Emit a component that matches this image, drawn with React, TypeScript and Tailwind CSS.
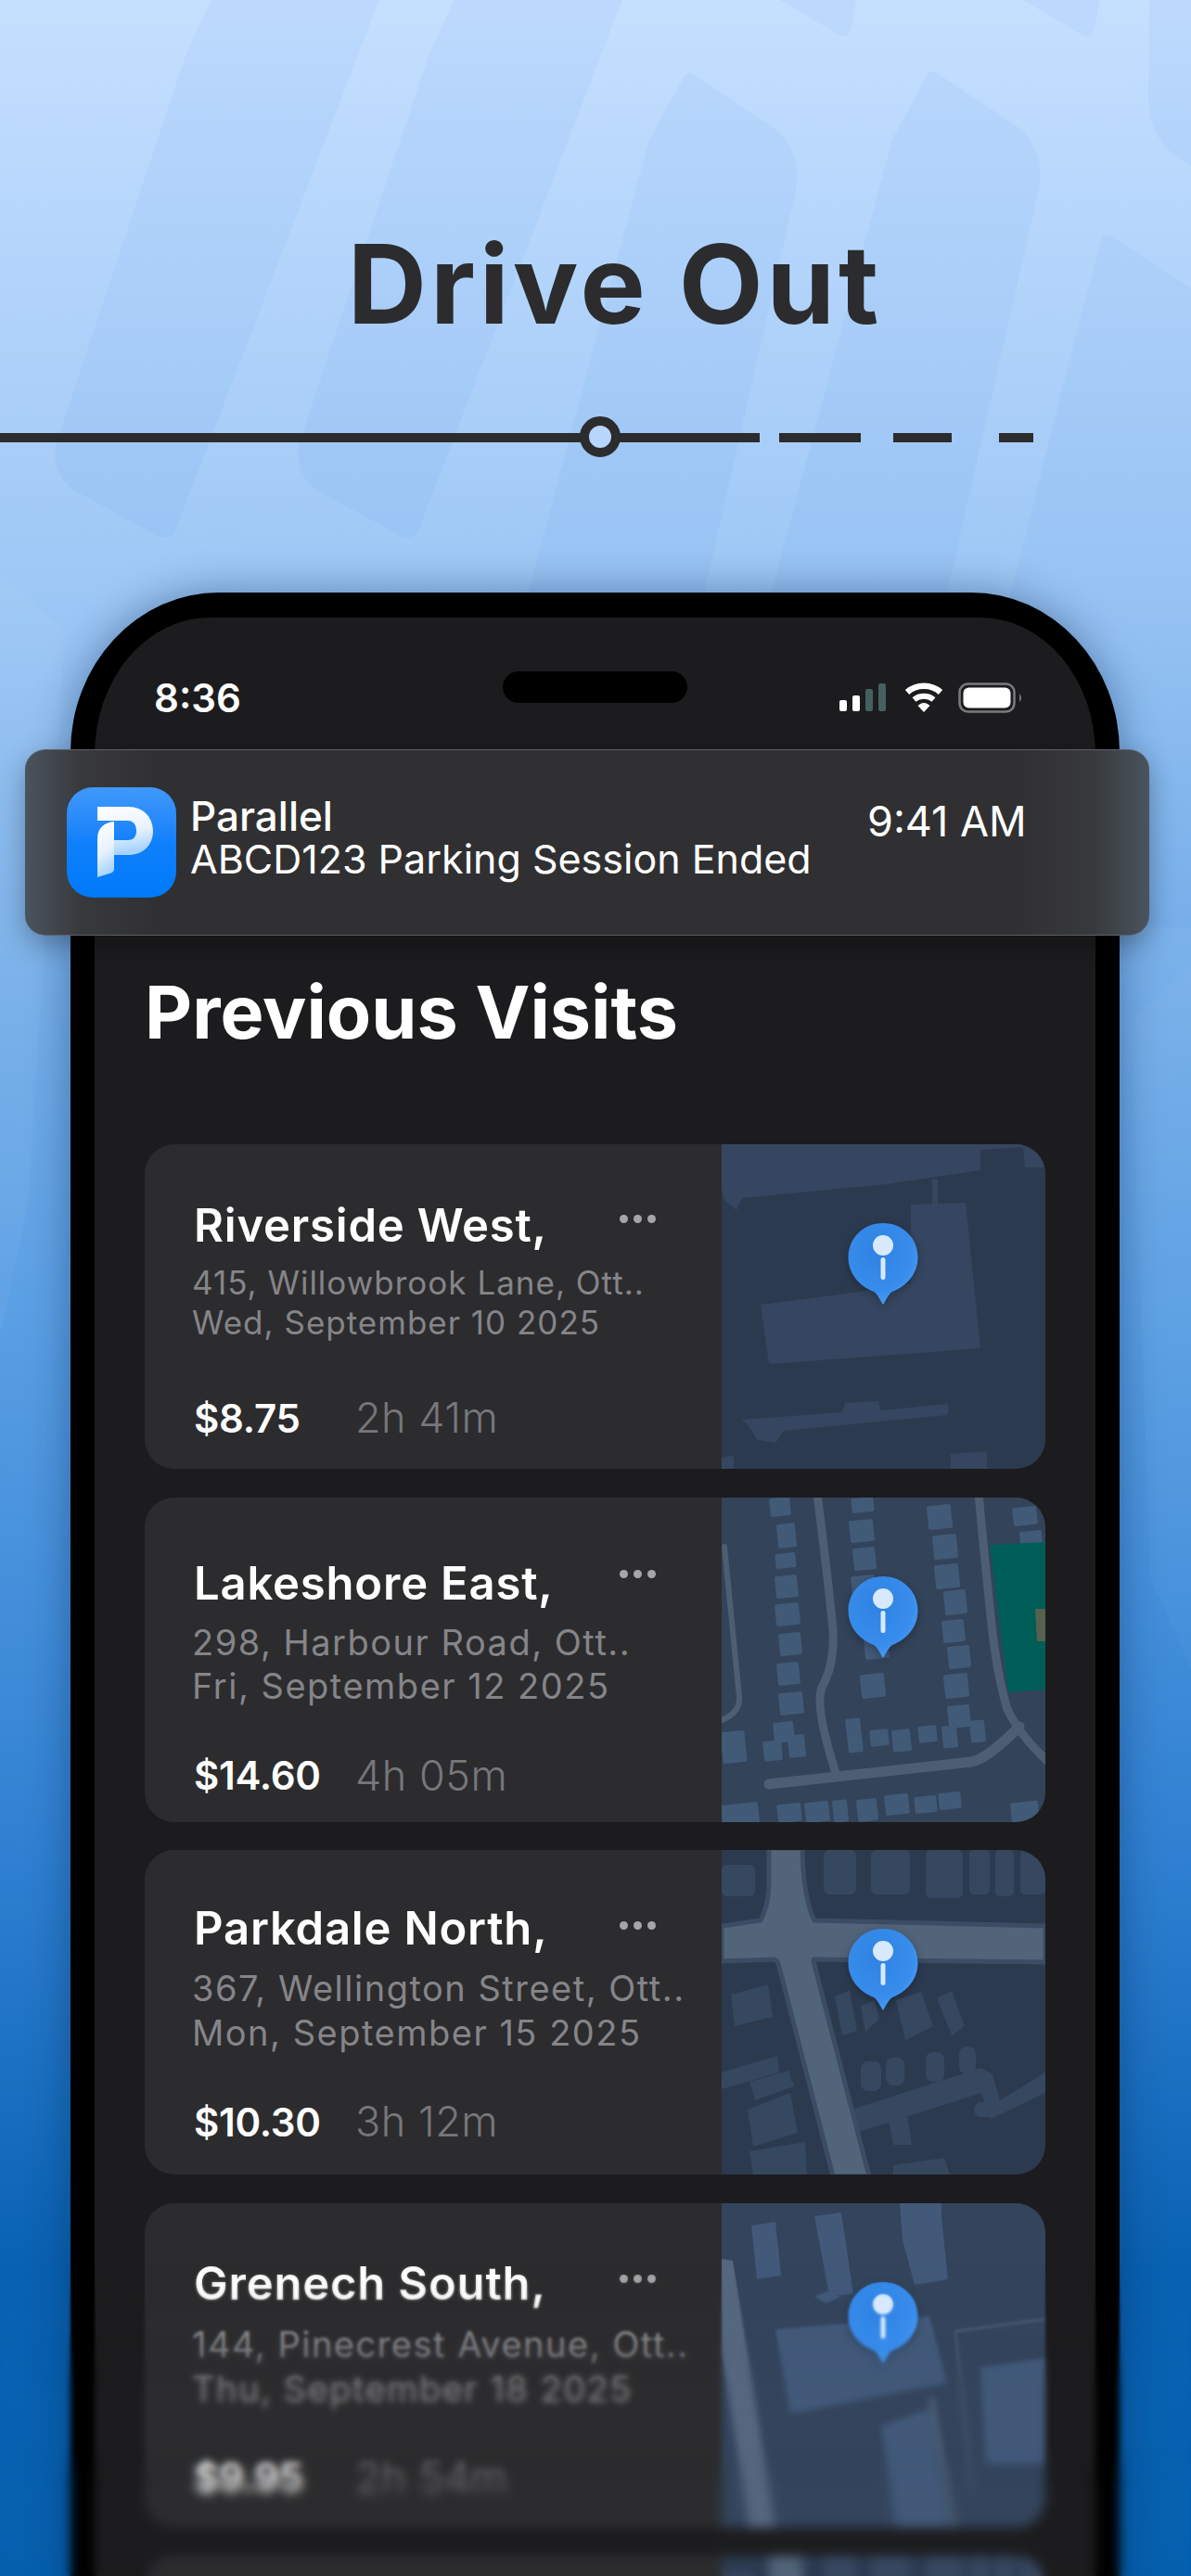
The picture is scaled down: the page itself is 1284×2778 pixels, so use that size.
import type { ReactNode } from 'react';

type Visit = {
  name: string;
  address: string;
  date: string;
  price: string;
  time: string;
  map: ReactNode;
  topPad: string;
  dotsGap: string;
  addressGap: string;
  dateGap: string;
  priceGap: string;
  addressSize: string;
};

type House = [number, number, number, number, number?];

const bgShapes = [
  'M246 -40H424L190 570Q184 584 170 578L82 530Q56 514 60 480L200 60Z',
  'M508 -40H686L452 570Q446 584 432 578L344 530Q318 514 322 480L462 60Z',
  'M738 82Q742 76 750 82L830 135Q866 160 858 205L700 900H500L700 150Z',
  'M1000 80Q1004 74 1012 80L1092 133Q1128 158 1120 203L962 900H762L962 150Z',
  'M1188 256Q1192 250 1200 256L1290 315V1000H1000L1150 400Z',
  'M800 -40H930L918 30Q914 44 902 36L790 -30Z',
  'M1062 -40H1192L1180 30Q1176 44 1164 36L1052 -30Z',
  'M1240 -40H1290V180Q1236 160 1238 100Z',
];

function BackgroundShapes() {
  return (
    <svg className="absolute inset-0" width="1284" height="2778" viewBox="0 0 1284 2778">
      {bgShapes.map((d) => (
        <path key={d} d={d} fill="#1f6fd2" fillOpacity="0.05" />
      ))}
      <path d="M0 620L70 680L30 1300L0 1440Z" fill="#ffffff" fillOpacity="0.04" />
      <path d="M1284 1040L1220 1100L1240 1700L1284 1800Z" fill="#ffffff" fillOpacity="0.03" />
    </svg>
  );
}

function Houses({ items, fill }: { items: House[]; fill: string }) {
  return (
    <>
      {items.map(([x, y, w, h, r = -6]) => (
        <rect key={`${x}-${y}`} x={x} y={y} width={w} height={h} rx="2" fill={fill} transform={`rotate(${r} ${x + w / 2} ${y + h / 2})`} />
      ))}
    </>
  );
}

function MapShell({ bg, children }: { bg: string; children: ReactNode }) {
  return (
    <svg className="block" width="349" height="350" viewBox="0 0 349 350">
      <rect width="349" height="350" fill={bg} />
      {children}
    </svg>
  );
}

function MapOne() {
  return (
    <MapShell bg="#2c3a50">
      <g fill="#364660">
        <path d="M0 0H279V28L178 43L22 58L16 71L3 60L0 50Z" />
        <path d="M279 6L325 3L327 25L349 25V0H279Z" />
        <path d="M42 173L142 160L204 150V65L263 63L279 220L51 237Z" />
        <path d="M227 38H233V65H227Z" />
        <path d="M22 297L130 289L133 279L169 277L172 287L243 280Q246 286 243 292L67 309L58 322L39 319L29 304Z" />
        <path d="M247 334L286 331V350H247Z" />
        <path d="M0 338L13 336V350H0Z" />
      </g>
    </MapShell>
  );
}

const lakeshoreHouses: House[] = [
  [52, 0, 22, 20], [60, 28, 20, 26], [58, 60, 22, 16], [58, 84, 24, 24], [58, 114, 26, 24], [62, 146, 24, 24],
  [60, 178, 24, 24], [62, 210, 26, 24], [56, 242, 22, 22], [140, 0, 24, 16], [138, 24, 26, 24], [142, 54, 24, 24],
  [140, 84, 26, 22], [146, 112, 26, 20], [154, 150, 26, 24], [150, 190, 26, 26], [222, 8, 26, 26], [228, 40, 26, 26],
  [230, 72, 26, 26], [240, 100, 24, 26], [238, 132, 24, 24], [244, 160, 24, 24], [240, 190, 26, 26], [244, 224, 24, 24],
  [314, 10, 26, 20], [322, 36, 24, 26], [134, 238, 16, 20], [136, 255, 16, 20], [160, 250, 20, 18], [184, 250, 20, 24],
  [212, 246, 20, 18], [238, 246, 16, 24], [268, 240, 16, 24], [0, 252, 26, 34], [45, 262, 20, 22], [72, 256, 18, 24],
  [0, 330, 40, 22], [60, 330, 26, 20], [90, 328, 26, 22], [120, 326, 16, 24], [146, 325, 22, 24], [176, 320, 26, 22],
  [208, 322, 24, 18], [234, 318, 24, 18], [312, 328, 30, 24],
];

function MapTwo() {
  return (
    <MapShell bg="#33435a">
      <Houses items={lakeshoreHouses} fill="#415a78" />
      <g fill="none" stroke="#4e5e72" strokeLinecap="round">
        <path d="M103 -4Q115 90 120 143Q122 180 108 205Q100 225 123 297" strokeWidth="9" />
        <path d="M277 -4Q284 70 289 118Q296 190 308 228Q320 255 352 285" strokeWidth="9" />
        <path d="M51 309L269 285Q285 283 321 247" strokeWidth="11" />
        <path d="M3 53L19 215Q20 232 0 240" strokeWidth="6" />
      </g>
      <path d="M289 51L349 48V207L309 210Z" fill="#005e58" />
      <path d="M338 120H349V155H340Z" fill="#58604f" />
    </MapShell>
  );
}

function MapThree() {
  return (
    <MapShell bg="#2c3a50">
      <g fill="#364760">
        <rect x="110" y="0" width="35" height="48" rx="6" />
        <rect x="161" y="0" width="42" height="48" rx="6" />
        <rect x="220" y="0" width="40" height="52" rx="6" />
        <rect x="267" y="0" width="22" height="48" rx="5" />
        <rect x="295" y="0" width="20" height="50" rx="5" />
        <rect x="322" y="0" width="27" height="48" rx="5" />
        <rect x="0" y="16" width="36" height="34" rx="6" />
        <path d="M10 156L50 145L55 180L14 190Z" />
        <path d="M122 158L138 152L146 195L130 200ZM150 168L165 162L170 182L155 196ZM188 162L215 153L228 190L198 205ZM232 160L248 152L262 190L248 200Z" />
        <rect x="150" y="228" width="22" height="32" rx="8" />
        <rect x="177" y="224" width="20" height="30" rx="8" />
        <rect x="220" y="218" width="20" height="32" rx="8" />
        <rect x="256" y="212" width="18" height="30" rx="8" />
        <path d="M28 280L74 262L82 305L34 320Z" />
        <path d="M30 250L72 238L78 255L36 270Z" />
        <path d="M140 280L280 235L292 242L300 270L349 240V262L290 290L280 262L145 305Z" />
        <path d="M180 290L200 285L205 318H185Z" />
        <rect x="272" y="272" width="22" height="16" rx="8" />
        <path d="M0 240L60 222L62 240L0 258Z" />
        <path d="M30 325L90 315L92 350H34Z" />
        <path d="M185 340L240 332L246 350H185Z" />
      </g>
      <path d="M51 -2H87Q88 52 100 76L349 82V121L100 118Q98 118 100 124L159 352H120L62 126Q60 118 56 118L0 120V82L42 76Q50 60 51 40Z" fill="#526479" stroke="#3c4c64" strokeWidth="5" />
    </MapShell>
  );
}

function MapFour() {
  return (
    <MapShell bg="#33445c">
      <path d="M0 60L12 62L58 352H30L0 160Z" fill="#55677f" />
      <g fill="#42597a">
        <path d="M32 24L58 20L64 78L38 82Z" />
        <path d="M100 14L129 10L142 98L116 100Z" />
        <path d="M192 0H237V15L244 82L208 88L195 40Z" />
        <path d="M100 100L115 95L128 101L112 108Z" />
        <path d="M58 136L224 122L243 194L74 227Z" />
        <path d="M279 177L349 167V281H285Z" />
        <path d="M172 240L224 222L244 352H188Z" />
      </g>
      <path d="M252 138L349 125M252 138L270 310" fill="none" stroke="#4d6077" strokeWidth="2" />
      <path d="M226 210L250 352" fill="none" stroke="#4d6077" strokeWidth="6" />
    </MapShell>
  );
}

function MapPin() {
  return (
    <svg className="absolute left-[136px] top-[84px] drop-shadow-[0_3px_5px_rgba(0,0,0,0.28)]" width="76" height="90" viewBox="0 0 76 90">
      <defs>
        <radialGradient id="pinFill" cx="0.42" cy="0.35" r="0.75">
          <stop offset="0" stopColor="#2f82e2" />
          <stop offset="0.65" stopColor="#378cec" />
          <stop offset="1" stopColor="#54a3fb" />
        </radialGradient>
      </defs>
      <path d="M38 1C59 1 75.500 17 75.500 38C75.500 56 63 69 49 74.500C45 76 43 81 38 89C33 81 31 76 27 74.500C13 69 0.500 56 0.500 38C0.500 17 17 1 38 1Z" fill="url(#pinFill)" />
      <circle cx="38" cy="25" r="11" fill="#d8e9fd" />
      <rect x="35.500" y="38" width="5" height="24" rx="2.500" fill="#d8e9fd" />
    </svg>
  );
}

function AppIcon() {
  return (
    <div className="w-[118px] h-[119px] rounded-[28px] bg-gradient-to-b from-[#4098fb] via-[#0f80fb] to-[#007afa] shrink-0 overflow-hidden">
      <svg width="118" height="119" viewBox="0 0 118 119">
        <defs>
          <linearGradient id="pFill" x1="0" y1="0" x2="0.2" y2="1">
            <stop offset="0" stopColor="#ffffff" />
            <stop offset="0.6" stopColor="#e6f2ff" />
            <stop offset="1" stopColor="#a9d3fd" />
          </linearGradient>
        </defs>
        <path fillRule="evenodd" d="M33 21H66C83 21 93 33 93 47C93 63 82 73 66 73H51V57H66C72 57 75 53 75 47C75 41 72 36 66 36H33Z" fill="url(#pFill)" />
        <path d="M33 56C33 44 40 38 51 37V88Q51 92 46 93L33 97Z" fill="url(#pFill)" />
      </svg>
    </div>
  );
}

function StatusIcons() {
  return (
    <div className="flex items-center">
      <svg width="50" height="31" viewBox="0 0 50 31">
        <rect x="0" y="18" width="8" height="12" rx="2" fill="#fff" />
        <rect x="14" y="13" width="8" height="17" rx="2" fill="#fff" />
        <rect x="28" y="6" width="8" height="24" rx="2" fill="#456060" />
        <rect x="42" y="0" width="8" height="30" rx="2" fill="#456060" />
      </svg>
      <svg className="ml-[20px]" width="42" height="32" viewBox="0 0 42 32" fill="none">
        <path d="M3 10.500C13 1.500 29 1.500 39 10.500" stroke="#fff" strokeWidth="6.500" />
        <path d="M10.500 18.500C16.500 13.500 25.500 13.500 31.500 18.500" stroke="#fff" strokeWidth="6" />
        <path d="M14.500 25L21 32L27.500 25C23 21 19 21 14.500 25Z" fill="#fff" />
      </svg>
      <svg className="ml-[16px]" width="70" height="33" viewBox="0 0 70 33">
        <rect x="1.500" y="1.500" width="59" height="30" rx="9" fill="none" stroke="#7b7b7d" strokeWidth="2.500" />
        <rect x="5.500" y="5.500" width="51" height="22" rx="6" fill="#fff" />
        <path d="M66 12Q70 16.500 66 21Z" fill="#7b7b7d" />
      </svg>
    </div>
  );
}

function Dots() {
  return (
    <div className="flex gap-[6px]">
      <span className="w-[9px] h-[9px] rounded-full bg-[#a6a6a8]" />
      <span className="w-[9px] h-[9px] rounded-full bg-[#a6a6a8]" />
      <span className="w-[9px] h-[9px] rounded-full bg-[#a6a6a8]" />
    </div>
  );
}

const visits: Visit[] = [
  {
    name: 'Riverside West,',
    address: '415, Willowbrook Lane, Ott..',
    date: 'Wed, September 10 2025',
    price: '$8.75',
    time: '2h 41m',
    map: <MapOne />,
    topPad: 'pt-[58px]',
    dotsGap: 'mt-[18px]',
    addressGap: 'mt-[9px]',
    dateGap: '-mt-px',
    priceGap: 'mt-[55px]',
    addressSize: 'text-[35px] tracking-[1px]',
  },
  {
    name: 'Lakeshore East,',
    address: '298, Harbour Road, Ott..',
    date: 'Fri, September 12 2025',
    price: '$14.60',
    time: '4h 05m',
    map: <MapTwo />,
    topPad: 'pt-[63px]',
    dotsGap: 'mt-[15px]',
    addressGap: 'mt-[11px]',
    dateGap: 'mt-[3px]',
    priceGap: 'mt-[49px]',
    addressSize: 'text-[38px] tracking-[1.5px]',
  },
  {
    name: 'Parkdale North,',
    address: '367, Wellington Street, Ott..',
    date: 'Mon, September 15 2025',
    price: '$10.30',
    time: '3h 12m',
    map: <MapThree />,
    topPad: 'pt-[55px]',
    dotsGap: 'mt-[22px]',
    addressGap: 'mt-[12px]',
    dateGap: 'mt-[4px]',
    priceGap: 'mt-[48px]',
    addressSize: 'text-[38px] tracking-[1.5px]',
  },
  {
    name: 'Grenech South,',
    address: '144, Pinecrest Avenue, Ott..',
    date: 'Thu, September 18 2025',
    price: '$9.95',
    time: '2h 54m',
    map: <MapFour />,
    topPad: 'pt-[57px]',
    dotsGap: 'mt-[20px]',
    addressGap: 'mt-[13px]',
    dateGap: 'mt-[4px]',
    priceGap: 'mt-[48px]',
    addressSize: 'text-[38px] tracking-[1.5px]',
  },
];

function VisitCard({ visit }: { visit: Visit }) {
  return (
    <div className="relative flex h-[350px] rounded-[32px] bg-[#2c2c2e] overflow-hidden shrink-0">
      <div className={`w-[622px] pl-[53px] pr-[71px] font-['Inter',sans-serif] ${visit.topPad}`}>
        <div className="flex justify-between items-start">
          <h3 className="h-[60px] leading-[60px] text-[49px] tracking-[0.8px] font-semibold text-white whitespace-nowrap">{visit.name}</h3>
          <div className={visit.dotsGap}>
            <Dots />
          </div>
        </div>
        <p className={`-ml-[2px] h-[44px] leading-[44px] font-normal text-[#858589] whitespace-nowrap ${visit.addressSize} ${visit.addressGap}`}>{visit.address}</p>
        <p className={`-ml-[2px] h-[44px] leading-[44px] font-normal text-[#858589] whitespace-nowrap ${visit.addressSize} ${visit.dateGap}`}>{visit.date}</p>
        <div className={`flex items-center h-[52px] ${visit.priceGap}`}>
          <span className="w-[174px] text-[42px] tracking-[-0.3px] font-semibold text-white">{visit.price}</span>
          <span className="text-[45px] tracking-[0.5px] font-light text-[#77777b]">{visit.time}</span>
        </div>
      </div>
      <div className="relative w-[349px]">
        {visit.map}
        <MapPin />
      </div>
    </div>
  );
}

export default function App() {
  return (
    <div className="relative w-[1284px] h-[2778px] overflow-hidden bg-[linear-gradient(180deg,#c5dfff_0px,#9fc8f6_620px,#78b0ea_1040px,#5a9fe4_1420px,#2f80d2_2000px,#0a62b2_2440px,#0660ae_2778px)]">
      <BackgroundShapes />

      <div className="relative">
        <h1 className="pt-[240px] pl-[42px] h-[373px] leading-[133px] text-center text-[118px] tracking-[4px] font-bold text-[#2c2c2e] font-['Inter',sans-serif]">
          Drive Out
        </h1>

        {/* timeline */}
        <div className="relative flex items-center h-[10px] mt-[94px]">
          <div className="w-[819px] h-[10px] bg-[#2c2c2e]" />
          <div className="ml-[21px] w-[88px] h-[10px] bg-[#2c2c2e]" />
          <div className="ml-[35px] w-[63px] h-[10px] bg-[#2c2c2e]" />
          <div className="ml-[51px] w-[37px] h-[10px] bg-[#2c2c2e]" />
          <div className="absolute left-[625px] -top-[18px] w-[44px] h-[44px] rounded-full border-[10px] border-[#2c2c2e] bg-[#b6d6fc]" />
        </div>

        {/* phone */}
        <div className="ml-[76px] mt-[162px] w-[1131px] h-[2200px] rounded-t-[160px_172px] bg-black pt-[27px] px-[26px] shadow-[0_0_45px_rgba(0,30,70,0.4)]">
          <div className="relative h-full rounded-t-[124px_148px] bg-[#1c1c1e] overflow-hidden">
            <div className="relative flex justify-between items-center h-[172px] pl-[64px] pr-[78px]">
              <span className="text-[42px] font-semibold text-white font-['Inter',sans-serif]">8:36</span>
              <StatusIcons />
              <div className="absolute left-[440px] top-[58px] w-[199px] h-[34px] rounded-full bg-black" />
            </div>

            <h2 className="mt-[208px] pl-[54px] h-[90px] leading-[90px] text-[79px] font-bold text-white font-['Inter',sans-serif]">Previous Visits</h2>

            <div className="flex flex-col gap-[30.5px] mt-[98px] mx-[54px]">
              {visits.map((visit) => (
                <VisitCard key={visit.name} visit={visit} />
              ))}
              <div className="flex h-[350px] rounded-[32px] bg-[#2c2c2e] overflow-hidden shrink-0">
                <div className="w-[622px]" />
                <MapThree />
              </div>
            </div>
          </div>
        </div>
      </div>

      {/* progressive blur over the bottom of the page */}
      <div className="absolute inset-x-0 top-[2440px] bottom-0 backdrop-blur-[1.5px] [mask-image:linear-gradient(180deg,transparent,black_60px)]" />
      <div className="absolute inset-x-0 top-[2515px] bottom-0 backdrop-blur-[3px] [mask-image:linear-gradient(180deg,transparent,black_60px)]" />
      <div className="absolute inset-x-0 top-[2640px] bottom-0 backdrop-blur-[5px] [mask-image:linear-gradient(180deg,transparent,black_40px)]" />

      {/* notification */}
      <div className="absolute left-[27px] top-[808px] w-[1212px] h-[201px] rounded-[22px] border-y border-[#5c6168] bg-[linear-gradient(90deg,#4a545f_0%,#38393c_5%,#303032_12%,#303032_88%,#38393c_95%,#4a545f_100%)] shadow-[0_10px_30px_rgba(0,0,0,0.3)] flex items-start pl-[45px] pt-[40px] font-['Inter',sans-serif] text-white">
        <AppIcon />
        <div className="ml-[15px] w-[730px] pt-[8px]">
          <p className="text-[44px] leading-[46px] font-medium">Parallel</p>
          <p className="text-[43px] leading-[46px] font-normal whitespace-nowrap">ABCD123 Parking Session Ended</p>
        </div>
        <span className="pt-[14px] text-[45px] leading-[46px]">9:41 AM</span>
      </div>
    </div>
  );
}
